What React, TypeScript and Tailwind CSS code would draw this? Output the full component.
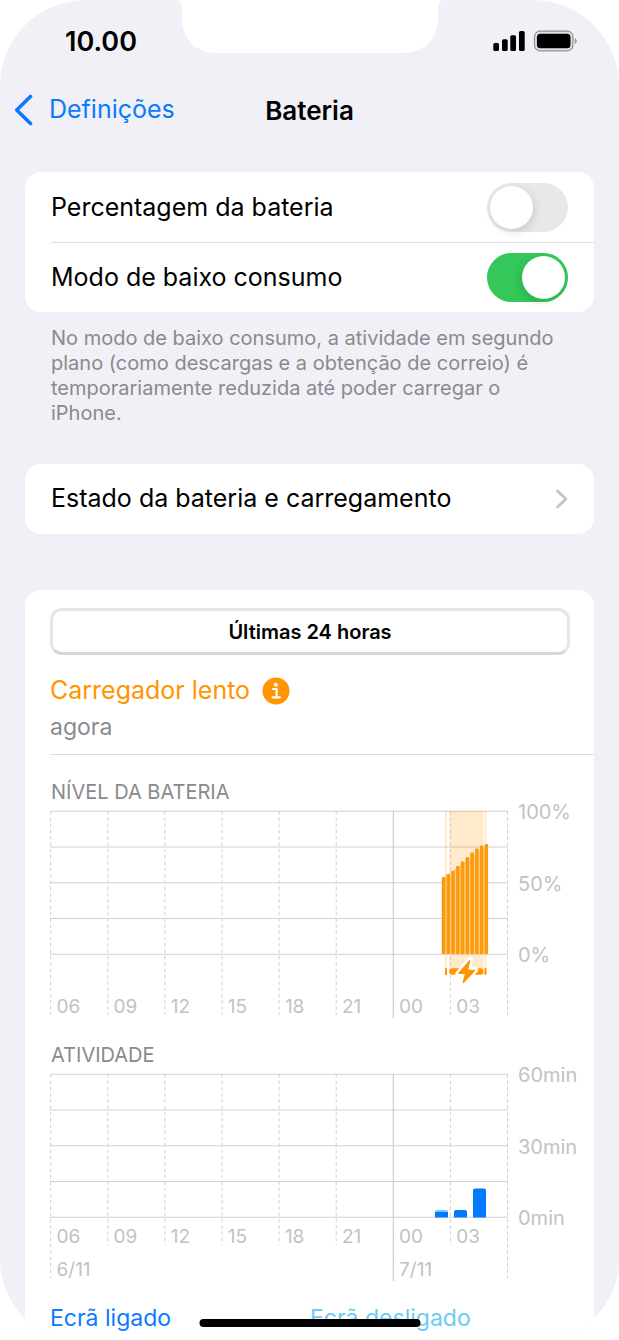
import React from "react";

const HOURS = ["06", "09", "12", "15", "18", "21", "00", "03"];
const COLUMN = 57.1;
const ROW = 35.75;
const TOP = 7;
const BASE = TOP + ROW * 4;

const LEVELS = [77, 80, 83, 88, 92.5, 97, 101.5, 105.5, 108.5, 110];

type ChartProps = {
  label: string;
  scale: string[];
  hourY: number;
  tickEnd: number;
  dates?: { column: number; text: string }[];
  children: React.ReactNode;
};

const Chart = ({ label, scale, hourY, tickEnd, dates, children }: ChartProps) => {
  return (
    <svg
      viewBox="0 0 544 214"
      className="block w-full overflow-visible"
      role="img"
      aria-label={label}
    >
      {[0, 1, 2, 3, 4].map((row) => (
        <line
          key={row}
          x1="0"
          x2="458"
          y1={TOP + row * ROW + 0.25}
          y2={TOP + row * ROW + 0.25}
          stroke="#d0d0d0"
        />
      ))}

      {[0, 1, 2, 3, 4, 5, 6, 7, 8].map((column) => {
        const solid = column === 6;
        const edge = column === 0 || column === 8;
        return (
          <line
            key={column}
            x1={column * COLUMN + 0.7}
            x2={column * COLUMN + 0.7}
            y1={TOP}
            y2={solid ? 214 : edge ? 211 : tickEnd}
            stroke={solid ? "#c4c4c4" : "#d0d0d0"}
            strokeDasharray={solid ? undefined : "3.6 2.7"}
          />
        );
      })}

      {children}

      <g fill="#c2c2c4">
        <g fontSize="19">
          {HOURS.map((hour, i) => (
            <text key={hour} x={i * COLUMN + 6.5} y={hourY}>
              {hour}
            </text>
          ))}
          {dates?.map(({ column, text }) => (
            <text key={text} x={column * COLUMN + 6.5} y="209">
              {text}
            </text>
          ))}
        </g>
        <g fontSize="20">
          {scale.map((text, i) => (
            <text key={text} x="468" y={TOP + i * ROW * 2 + 8}>
              {text}
            </text>
          ))}
        </g>
      </g>
    </svg>
  );
};

const Switch = ({ id, on }: { id: string; on?: boolean }) => {
  return (
    <input
      id={id}
      type="checkbox"
      role="switch"
      defaultChecked={on}
      className="flex h-[49px] w-[81px] shrink-0 appearance-none items-center rounded-full bg-[#e8e8e8] px-[3px] before:size-[43px] before:rounded-full before:bg-white before:shadow-[2px_3px_8px_rgba(0,0,0,0.12)] checked:justify-end checked:bg-[#34c759] checked:before:shadow-[-2px_3px_8px_rgba(0,0,0,0.12)]"
    />
  );
};

const StatusBar = () => {
  return (
    <div className="grid h-[74px] grid-cols-[1fr_268px_1fr]">
      <p className="mt-[26px] pl-[65px] text-[27px] leading-8 font-semibold">
        10.00
      </p>
      <svg viewBox="0 0 268 53" className="h-[53px] w-[268px]" aria-hidden="true">
        <path
          d="M0 0C4 0 6 3 6 8V17C6 39 19 53 42 53H226C249 53 262 39 262 17V8C262 3 264 0 268 0Z"
          fill="#fff"
        />
      </svg>
      <div className="mt-[30px] flex items-start justify-end gap-2 pr-[41px]">
        <svg viewBox="0 0 32 22" className="h-[22px] w-8" aria-label="Rede">
          <rect x="0.300" y="13" width="5.700" height="8" rx="1.500" />
          <rect x="9" y="9.300" width="5.700" height="11.700" rx="1.500" />
          <rect x="17.300" y="5.300" width="5.700" height="15.700" rx="1.500" />
          <rect x="26" y="1" width="5.700" height="20" rx="1.500" />
        </svg>
        <svg viewBox="0 0 45 22" className="h-[22px] w-[45px]" aria-label="Bateria">
          <rect
            x="1.500"
            y="1.200"
            width="38.400"
            height="19.600"
            rx="5.500"
            fill="#e2e1e7"
            stroke="#8f8f94"
            strokeWidth="1.200"
          />
          <rect x="3.900" y="3.800" width="33.600" height="14.400" rx="3.500" />
          <path d="M41.700 8C44.400 9 44.400 13 41.700 14Z" fill="#9b9ba0" />
        </svg>
      </div>
    </div>
  );
};

const App = () => {
  return (
    <div className="min-h-screen bg-white font-[Inter,'Liberation_Sans',sans-serif] text-black">
      <div className="relative flex min-h-screen flex-col overflow-hidden rounded-t-[86px] rounded-b-[80px] bg-[#f1f0f6]">
        <StatusBar />

        <header className="grid h-[72px] grid-cols-[1fr_auto_1fr] items-center px-[14px]">
          <a href="#definicoes" className="flex items-center gap-4 text-[25px] text-[#0a7aff]">
            <svg viewBox="0 0 19 32" className="h-8 w-[19px]" fill="none">
              <path
                d="M16.500 2.500L2.700 16L16.500 29.500"
                stroke="currentColor"
                strokeWidth="3.600"
                strokeLinecap="round"
                strokeLinejoin="round"
              />
            </svg>
            Definições
          </a>
          <h1 className="text-[26px] font-semibold">Bateria</h1>
        </header>

        <main className="mt-[26px] flex grow flex-col px-[25px]">
          <section className="rounded-2xl bg-white pl-[26px] text-[25px]">
            <div className="flex h-[71px] items-center justify-between border-b border-[#e0e0e2] pt-px pr-[26px]">
              <label htmlFor="percentagem">Percentagem da bateria</label>
              <Switch id="percentagem" />
            </div>
            <div className="flex h-[69px] items-center justify-between pr-[26px]">
              <label htmlFor="baixo-consumo">Modo de baixo consumo</label>
              <Switch id="baixo-consumo" on />
            </div>
          </section>

          <p className="mt-[14px] px-[26px] text-[20px] leading-[25px] text-[#8a8a8e]">
            No modo de baixo consumo, a atividade em segundo
            <br />
            plano (como descargas e a obtenção de correio) é
            <br />
            temporariamente reduzida até poder carregar o
            <br />
            iPhone.
          </p>

          <a
            href="#estado"
            className="mt-[38px] flex h-[70px] items-center justify-between rounded-2xl bg-white pr-[25px] pl-[26px] text-[25px]"
          >
            Estado da bateria e carregamento
            <svg viewBox="0 0 14 22" className="h-[22px] w-[14px]" fill="none">
              <path
                d="M2.500 3L11 11L2.500 19"
                stroke="#c4c4c6"
                strokeWidth="2.800"
                strokeLinecap="round"
                strokeLinejoin="round"
              />
            </svg>
          </a>

          <section className="mt-14 grow rounded-t-2xl bg-white pt-[18px] pl-[25px]">
            <div className="pr-6">
              <button
                type="button"
                className="h-[47px] w-full rounded-xl border-3 border-[#e6e6e6] border-b-[#d6d6d6] bg-white text-[20px] font-semibold"
              >
                Últimas 24 horas
              </button>
            </div>

            <div className="mt-[18px] border-b border-[#dcdcde] pb-[9px]">
              <h2 className="flex h-9 items-center gap-3 text-[25px] text-[#ff9500]">
                Carregador lento
                <svg viewBox="0 0 28 28" className="size-7" aria-hidden="true">
                  <circle cx="14" cy="14" r="13.500" fill="#ff9500" />
                  <circle cx="13.800" cy="7.700" r="2" fill="#fff" />
                  <path
                    d="M11 12H14.600V20M10.600 20.300H17.800"
                    fill="none"
                    stroke="#fff"
                    strokeWidth="2.200"
                    strokeLinecap="round"
                    strokeLinejoin="round"
                  />
                </svg>
              </h2>
              <p className="text-[23px] leading-9 text-[#8a8a8e]">agora</p>
            </div>

            <h3 className="mt-[25px] pl-px text-[20px] leading-6 text-[#8a8a8e]">
              NÍVEL DA BATERIA
            </h3>
            <Chart
              label="Nível da bateria"
              scale={["100%", "50%", "0%"]}
              hourY={209}
              tickEnd={211}
            >
              <g fill="#ff9500" fillOpacity="0.2">
                <rect x="395" y="7" width="2" height="163" />
                <rect x="399.500" y="7" width="34" height="163" />
                <rect x="434.500" y="7" width="2" height="163" />
              </g>
              <path d="M393 150V74L436 42V150Z" fill="#ffcf80" />
              {LEVELS.map((level, i) => (
                <rect
                  key={level}
                  x={391.8 + i * 4.76}
                  y={BASE - level}
                  width="3.500"
                  height={level}
                  rx="1"
                  fill="#fb990f"
                />
              ))}
              <g fill="#ff9500">
                <rect x="395" y="164" width="2" height="7" rx="0.500" />
                <rect x="399.300" y="164.200" width="34.200" height="6.600" rx="3" />
                <rect x="434.500" y="164" width="2" height="7" rx="0.500" />
              </g>
              <path
                d="M420 156L408.400 169.700H415.300L412.800 179.500L425 166H417.500Z"
                fill="#fff"
                stroke="#fff"
                strokeWidth="6"
                strokeLinejoin="round"
              />
              <path
                d="M419.500 157L409 169.300H415.700L413.300 178.500L424.500 166.500H417.300Z"
                fill="#ff9500"
                stroke="#ff9500"
                strokeWidth="1.400"
                strokeLinejoin="round"
              />
            </Chart>

            <h3 className="mt-[25px] pl-px text-[20px] leading-6 text-[#8a8a8e]">
              ATIVIDADE
            </h3>
            <Chart
              label="Atividade"
              scale={["60min", "30min", "0min"]}
              hourY={176}
              tickEnd={178}
              dates={[
                { column: 0, text: "6/11" },
                { column: 6, text: "7/11" },
              ]}
            >
              <path d="M385 150V145Q385 143 387 143H396Q398 143 398 145V150Z" fill="#6ccbfa" />
              <rect x="385" y="145" width="13" height="5.500" fill="#007aff" />
              <path d="M404 150.500V145Q404 143 406 143H415Q417 143 417 145V150.500Z" fill="#007aff" />
              <path d="M423 150.500V123.500Q423 121.500 425 121.500H434Q436 121.500 436 123.500V150.500Z" fill="#007aff" />
            </Chart>

            <div className="mt-[23px] grid grid-cols-[260fr_284fr] pb-[7px] text-[23px] leading-7">
              <span className="text-[#0a7aff]">Ecrã ligado</span>
              <span className="text-[#6ccbf5]">Ecrã desligado</span>
            </div>
          </section>
        </main>

        <div className="absolute bottom-[13px] left-1/2 h-2 w-[221px] -translate-x-1/2 rounded-full bg-black" />
      </div>
    </div>
  );
};

export default App;
